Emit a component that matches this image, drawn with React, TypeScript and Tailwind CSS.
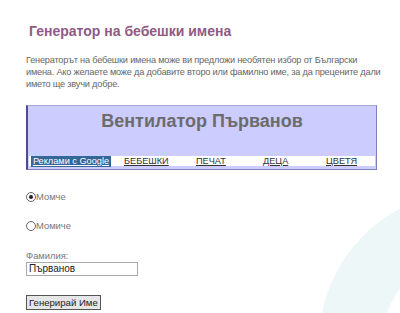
export default function App() {
  return (
    <div className="relative w-[400px] h-[313px] overflow-hidden bg-white font-['Liberation_Sans',Arial,sans-serif]">
      {/* faint ring in the corner */}
      <div className="absolute left-[319px] top-[192px] w-[300px] h-[300px] rounded-full border-[63px] border-[#eef7f7]" />

      <div className="relative pl-[26px] pt-[22px]">
        <h1 className="pl-[3px] text-[14px] leading-[18px] font-bold text-[#8e5a85]">Генератор на бебешки имена</h1>

        <p className="mt-[14px] w-[370px] text-[9.2px] leading-[12px] tracking-[-0.2px] text-[#666]">
          Генераторът на бебешки имена може ви предложи необятен избор от Български<br />
          имена. Ако желаете може да добавите второ или фамилно име, за да прецените дали името ще звучи добре.
        </p>

        <div className="mt-[15px] w-[351px] h-[65px] bg-[#ccccff] border-l-2 border-t border-r border-b border-l-[#4c4c8c] border-t-[#a8a8d8] border-r-[#8080b8] border-b-[#8080b8]">
          <div className="pt-[4px] h-[26px] text-center text-[18px] leading-[22px] font-bold text-[#6b6b6b]">Вентилатор Първанов</div>
          <div className="mt-[24px] mx-[1px] h-[10px] bg-white flex items-center text-[9.2px] leading-[10px]">
            <span className="ml-[2px] w-[80px] h-[11px] bg-[#336699] text-white underline flex items-center justify-center">Реклами с Google</span>
            <span className="ml-[13px] w-[72px] text-[#333] underline">БЕБЕШКИ</span>
            <span className="w-[67px] text-[#333] underline">ПЕЧАТ</span>
            <span className="w-[63px] text-[#333] underline">ДЕЦА</span>
            <span className="text-[#333] underline">ЦВЕТЯ</span>
          </div>
        </div>

        <div className="mt-[21px] h-[12px] flex items-center text-[9.4px] text-[#777]">
          <span className="w-[10px] h-[10px] rounded-full border border-[#666] bg-white flex items-center justify-center">
            <span className="w-[4px] h-[4px] rounded-full bg-[#222]" />
          </span>
          Момче
        </div>
        <div className="mt-[17px] h-[12px] flex items-center text-[9.4px] text-[#777]">
          <span className="w-[10px] h-[10px] rounded-full border border-[#666] bg-white" />
          Момиче
        </div>

        <div className="mt-[18px] h-[12px] text-[9.4px] leading-[12px] text-[#777]">Фамилия:</div>
        <div className="w-[112px] h-[14px] px-[2px] border border-[#aaa] text-[10px] leading-[12px] text-[#222]">Първанов</div>

        <div className="mt-[19px] inline-block h-[15px] px-[2px] whitespace-nowrap border border-[#555] bg-[#e6e6e6] text-[9.6px] leading-[13px] text-[#222]">Генерирай Име</div>
      </div>
    </div>
  )
}
